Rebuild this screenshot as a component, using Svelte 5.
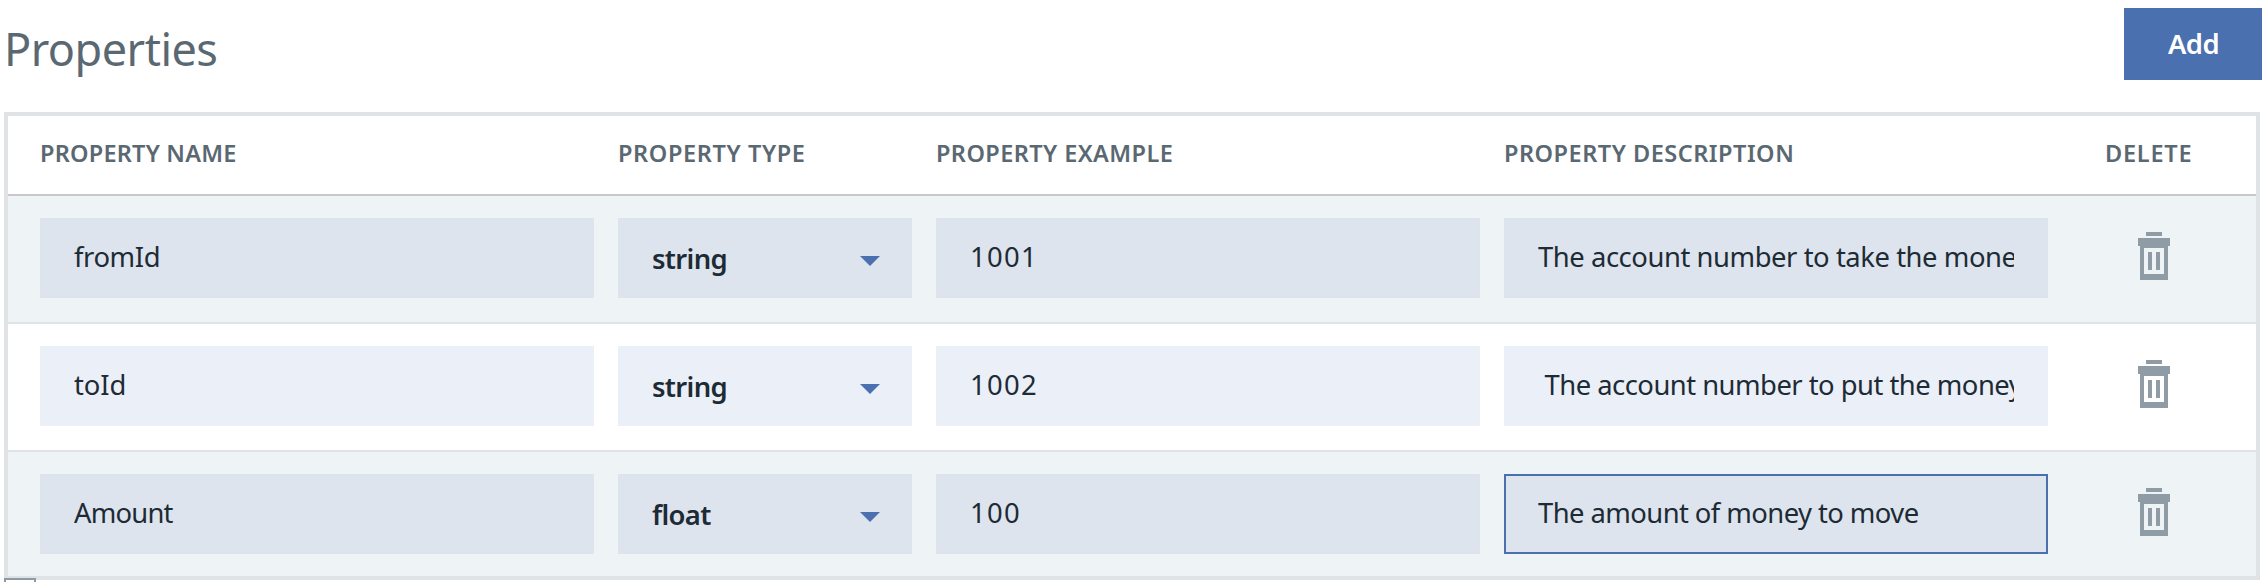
<script>
  const headers = [
    { label: 'PROPERTY NAME', track: 0.22 },
    { label: 'PROPERTY TYPE', track: 0.62 },
    { label: 'PROPERTY EXAMPLE', track: 0.42 },
    { label: 'PROPERTY DESCRIPTION', track: 0.51 },
    { label: 'DELETE', track: 0.75 }
  ];

  const rows = [
    { name: 'fromId', nameTrack: -0.4, type: 'string', example: '1001', description: 'The account number to take the money', track: -0.44 },
    { name: 'toId', nameTrack: -0.1, type: 'string', example: '1002', description: ' The account number to put the money', track: -0.52 },
    { name: 'Amount', nameTrack: -0.8, type: 'float', example: '100', description: 'The amount of money to move', track: -0.57, focused: true }
  ];
</script>

<section class="properties">
  <header class="top">
    <h2>Properties</h2>
    <button class="add" type="button">Add</button>
  </header>

  <div class="table">
    <div class="grid head">
      {#each headers as h}
        <span style="letter-spacing: {h.track}px">{h.label}</span>
      {/each}
    </div>
    {#each rows as row}
      <div class="grid row">
        <div class="field"><span class="value" style="letter-spacing: {row.nameTrack}px">{row.name}</span></div>
        <div class="field select">
          <span>{row.type}</span>
          <svg width="20" height="10" viewBox="0 0 20 10"><path d="M0 0h20L10 10z" fill="#4a70b0" /></svg>
        </div>
        <div class="field"><span class="value number">{row.example}</span></div>
        <div class="field" class:focused={row.focused}><span class="value" style="letter-spacing: {row.track}px">{row.description}</span></div>
        <div class="delete">
          <svg width="32" height="48" viewBox="0 0 32 48" fill="#8f9ca6">
            <path d="M8 0h16v4H8zM0 6h32v8h-2v34H2V14H0zM6 16v26h20V16z" fill-rule="evenodd" />
            <path d="M10 20h4v18h-4zM18 20h4v18h-4z" />
          </svg>
        </div>
      </div>
    {/each}
  </div>
  <div class="checkbox"></div>
</section>

<style>
  :global(body) {
    background: #fff;
    overflow: hidden;
  }

  .properties {
    box-sizing: border-box;
    height: 582px;
    padding-left: 4px;
    overflow: hidden;
    font-family: 'Noto Sans', sans-serif;
    color: #1d2b35;
  }

  .top {
    display: flex;
    justify-content: space-between;
    height: 112px;
  }

  h2 {
    margin: 18px 0 0;
    font-size: 45px;
    line-height: 62px;
    font-weight: 400;
    letter-spacing: -0.52px;
    color: #5a6872;
  }

  .add {
    width: 138px;
    height: 72px;
    margin-top: 8px;
    padding: 0 0 1px 1px;
    border: 0;
    background: #4a70b0;
    color: #fff;
    font: 600 27.4px/71px 'Noto Sans', sans-serif;
    letter-spacing: -0.6px;
  }

  .table {
    box-sizing: border-box;
    width: 2256px;
    height: 468px;
    border: 4px solid #dfe3e6;
  }

  .grid {
    box-sizing: border-box;
    display: grid;
    grid-template-columns: 554px 294px 544px 544px 1fr;
    column-gap: 24px;
    padding-left: 32px;
  }

  .head {
    height: 80px;
    border-bottom: 2px solid #c8c8c8;
    font-size: 23.5px;
    line-height: 74px;
    font-weight: 600;
    color: #5a6872;
  }

  .head span {
    white-space: nowrap;
  }

  .head span:last-child {
    margin-left: 33px;
  }

  .row {
    height: 128px;
    padding-top: 22px;
    border-bottom: 2px solid #dfe3e6;
    background: #fff;
  }

  .row:nth-child(even) {
    background: #eef3f6;
  }

  .row:last-child {
    height: 124px;
    border-bottom: 0;
  }

  .field {
    box-sizing: border-box;
    display: flex;
    align-items: flex-start;
    height: 80px;
    padding: 0 32px;
    border: 2px solid transparent;
    background: #ebeff8;
    font-size: 27.4px;
    line-height: 74px;
  }

  .row:nth-child(even) .field {
    background-color: #dee4ee;
  }

  .field.focused {
    border-color: #4a70b0;
  }

  .value {
    flex: 1;
    min-width: 0;
    overflow: hidden;
    white-space: pre;
  }

  .number {
    letter-spacing: 1.3px;
  }

  .select {
    justify-content: space-between;
    padding-right: 30px;
    font-weight: 600;
    line-height: 78px;
    letter-spacing: -0.65px;
  }

  .select svg {
    margin-top: 36px;
  }

  .delete {
    padding: 14px 0 0 66px;
  }

  .delete svg {
    display: block;
  }

  .checkbox {
    position: relative;
    box-sizing: border-box;
    width: 32px;
    height: 32px;
    margin-top: -2px;
    border: 2px solid #8c9ba5;
    background: #fff;
  }
</style>
